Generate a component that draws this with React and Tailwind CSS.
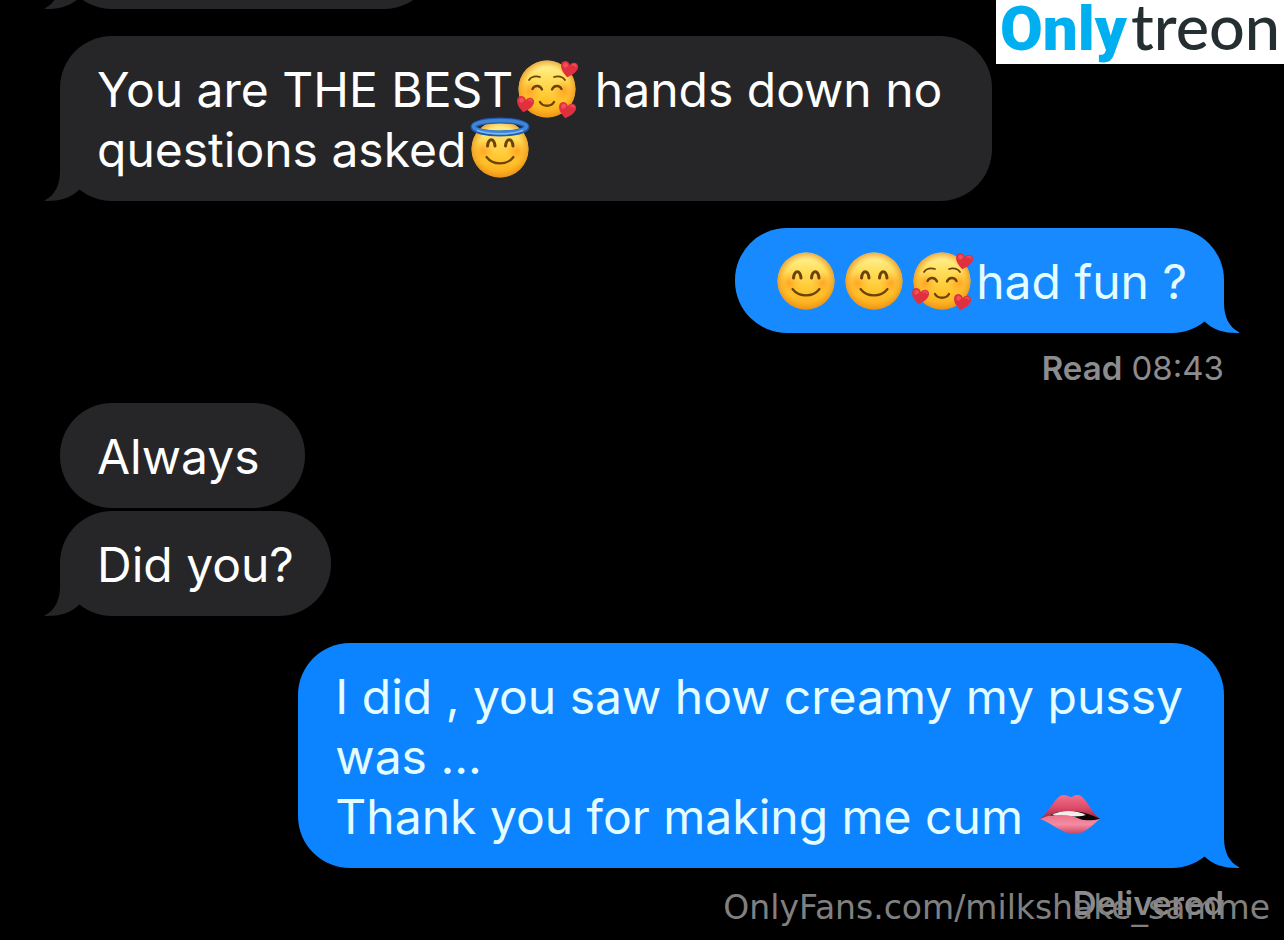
import React, { useId } from 'react';

const Emoji = ({ label, children }) => (
  <svg
    role="img"
    aria-label={label}
    viewBox="0 0 60 60"
    className="inline-block w-[60px] h-[60px] mx-1 -my-1 align-[-8px] overflow-visible"
  >
    {children}
  </svg>
);

// Yellow ball shared by every face
const Face = () => {
  const id = useId();
  return (
    <>
      <defs>
        <linearGradient id={id + 'skin'} x1="0" y1="0" x2="0" y2="1">
          <stop offset="0" stopColor="#fff6a0" />
          <stop offset="0.3" stopColor="#ffe060" />
          <stop offset="0.7" stopColor="#ffc42c" />
          <stop offset="1" stopColor="#fba81a" />
        </linearGradient>
        <radialGradient id={id + 'edge'}>
          <stop offset="0.75" stopColor="#f39a17" stopOpacity="0" />
          <stop offset="1" stopColor="#e58a17" stopOpacity="0.7" />
        </radialGradient>
        <radialGradient id={id + 'cheek'}>
          <stop offset="0" stopColor="#ff8a10" stopOpacity="0.6" />
          <stop offset="1" stopColor="#ff9a1c" stopOpacity="0" />
        </radialGradient>
      </defs>
      <circle cx="30" cy="30" r="28.5" fill={`url(#${id}skin)`} />
      <circle cx="13" cy="32" r="11.500" fill={`url(#${id}cheek)`} />
      <circle cx="47" cy="32" r="11.500" fill={`url(#${id}cheek)`} />
      <circle cx="30" cy="30" r="28.5" fill={`url(#${id}edge)`} />
    </>
  );
};

const HappyFeatures = () => (
  <g fill="none" stroke="#6b4208" strokeLinecap="round">
    <path d="M17.500 27 C18.500 18.500 24 18.500 25 27" strokeWidth="3" />
    <path d="M35.500 27 C36.500 18.500 42 18.500 43 27" strokeWidth="3" />
    <path d="M16.500 38 C23 46.500 37 46.500 43.500 38" strokeWidth="2.200" />
  </g>
);

const Smile = () => (
  <Emoji label="smiling face with smiling eyes">
    <Face />
    <HappyFeatures />
  </Emoji>
);

const Halo = () => (
  <Emoji label="smiling face with halo">
    <Face />
    <HappyFeatures />
    <ellipse cx="30" cy="8" rx="26.500" ry="6.500" fill="none" stroke="#1f5bad" strokeWidth="6" />
    <ellipse cx="30" cy="7.500" rx="26.500" ry="6" fill="none" stroke="#3f86da" strokeWidth="3.500" />
    <path d="M7 11.500 C20 16 40 16 53 11.500" fill="none" stroke="#7ab8fa" strokeWidth="1.800" />
  </Emoji>
);

const Heart = ({ transform }) => (
  <g transform={transform}>
    <path
      d="M0 8.500 C-5 5 -9 1 -8.500 -3.500 C-8 -8 -2 -8.500 0 -4 C2 -8.500 8 -8 8.500 -3.500 C9 1 5 5 0 8.500 Z"
      fill="#e0303f"
    />
    <path d="M-6.500 -3 C-6 -6.500 -2.500 -6 -1.500 -3.500 C-2.500 0 -6 1 -6.500 -3 Z" fill="#f0505a" />
    <path d="M2.500 -4 C3.500 -6 5.500 -6 6.500 -3.500" fill="none" stroke="#f0505a" strokeWidth="1.500" />
  </g>
);

const Hearts = () => (
  <Emoji label="smiling face with hearts">
    <Face />
    <g fill="none" stroke="#6b4208" strokeLinecap="round">
      <path d="M12 21 C14 17.500 19 16.500 23 18" strokeWidth="1.800" />
      <path d="M37 18 C41 16.500 46 17.500 48 21" strokeWidth="1.800" />
      <path d="M15.500 30 C17.500 26 23 26 25 30.500" strokeWidth="2.400" />
      <path d="M35 30.500 C37 26 42.500 26 44.500 30" strokeWidth="2.400" />
      <path d="M23 43 C26 48 34 48 37 43" strokeWidth="2.400" />
    </g>
    <Heart transform="translate(52 10) rotate(12)" />
    <Heart transform="translate(8 45) rotate(12)" />
    <Heart transform="translate(50 51) rotate(12)" />
  </Emoji>
);

const Lips = () => {
  const id = useId();
  return (
    <Emoji label="biting lip">
      <defs>
        <linearGradient id={id + 'top'} x1="0" y1="0" x2="0" y2="1">
          <stop offset="0" stopColor="#f0718c" />
          <stop offset="0.5" stopColor="#dc4a68" />
          <stop offset="1" stopColor="#8f1c38" />
        </linearGradient>
        <linearGradient id={id + 'low'} x1="0" y1="0" x2="0" y2="1">
          <stop offset="0" stopColor="#e8738c" />
          <stop offset="0.5" stopColor="#f58ba0" />
          <stop offset="1" stopColor="#c94565" />
        </linearGradient>
      </defs>
      <path
        d="M0 33 C9 27 15 10 23 9 C27 8.500 29 11 31 11 C33 11 34 8.500 38 9 C46 10 51 27 60.500 33 C48 36 12 36 0 33 Z"
        fill={`url(#${id}top)`}
      />
      <path d="M10 29.500 C20 23.500 40 22.500 60 33 C46 37 20 34 10 29.500 Z" fill="#0c0508" />
      <path d="M12 29 C20 24 36 23.500 46 29 C40 31 20 31 12 29 Z" fill="#f4eeea" />
      <path
        d="M0 33 C5 31 9 29 14 29.500 C26 28 34 30 40 33 C47 35.500 54 34 60.500 33 C51 39 46 48 34 48 C22 48 12 37 0 33 Z"
        fill={`url(#${id}low)`}
      />
    </Emoji>
  );
};

const Tail = ({ side }) => (
  <svg
    aria-hidden="true"
    viewBox="0 0 40 56"
    fill="currentColor"
    className={
      side === 'left'
        ? 'absolute bottom-0 -left-4 w-10 h-14'
        : 'absolute bottom-0 -right-4 w-10 h-14 -scale-x-100'
    }
  >
    <path d="M16 2 V26 C16 40 11 50 1 55.200 C0 56 1 56 3 56 C16 56 27 53 36 44 V2 Z" />
  </svg>
);

const Bubble = ({ side, tail, color, className, children }) => (
  <div
    className={`relative max-w-full rounded-[52px] pt-6 pb-[21px] pl-[37px] ${color} ${className} ${
      side === 'left' ? 'self-start' : 'self-end'
    }`}
  >
    {tail && <Tail side={side} />}
    <p className={side === 'left' ? 'relative text-white' : 'relative text-[#e4feff]'}>{children}</p>
  </div>
);

const incoming = 'bg-[#262628] text-[#262628]';

const App = () => {
  return (
    <div className="relative min-h-screen overflow-hidden bg-black font-['Inter',sans-serif]">
      <main className="flex flex-col px-[60px] text-[48px] leading-[60px]">
        {/* End of the previous message, scrolled almost out of view */}
        <div className="-mx-4 px-4 h-[9px] overflow-hidden flex flex-col justify-end">
          <div className="relative shrink-0 w-[376px] h-[105px] rounded-[52px] bg-[#262628] text-[#262628]">
            <Tail side="left" />
          </div>
        </div>

        <Bubble side="left" tail color={incoming} className="mt-[27px] pr-[50px]">
          You are THE BEST<Hearts /> hands down no<br />
          questions asked<Halo />
        </Bubble>

        <Bubble side="right" tail color="bg-[#188aff] text-[#188aff]" className="mt-[27px] pr-[37px]">
          <Smile /><Smile /><Hearts />had fun ?
        </Bubble>
        <p className="h-[70px] text-right text-[33px] leading-[70px] text-[#8c8c8f]">
          <span className="font-semibold">Read</span> 08:43
        </p>

        <Bubble side="left" color={incoming} className="pr-[45px]">
          Always
        </Bubble>
        <Bubble side="left" tail color={incoming} className="mt-[3px] pr-[37px]">
          Did you?
        </Bubble>

        <Bubble side="right" tail color="bg-[#0d84ff] text-[#0d84ff]" className="mt-[27px] pr-[41px]">
          I did , you saw how creamy my pussy<br />
          was ...<br />
          Thank you for making me cum <Lips />
        </Bubble>
        <p className="h-[70px] text-right text-[33px] leading-[70px] font-semibold text-[#8c8c8f]">
          Delivered
        </p>
      </main>

      {/* Site logo */}
      <div className="absolute top-0 right-0 w-[288px] h-16 pl-1 flex items-baseline bg-white leading-[52px] whitespace-nowrap">
        <span className="font-['Roboto',sans-serif] font-black text-[62px] text-[#00aff0]">Only</span>
        <span className="pl-1 font-['Lato',sans-serif] font-medium text-[63px] text-[#252f31]">treon</span>
      </div>

      {/* Watermark */}
      <p className="absolute right-[14px] bottom-3 text-[33px] leading-10 text-[#808080] font-['DejaVu_Sans',sans-serif]">
        OnlyFans.com/milkshake_samme
      </p>
    </div>
  );
};

export default App;
